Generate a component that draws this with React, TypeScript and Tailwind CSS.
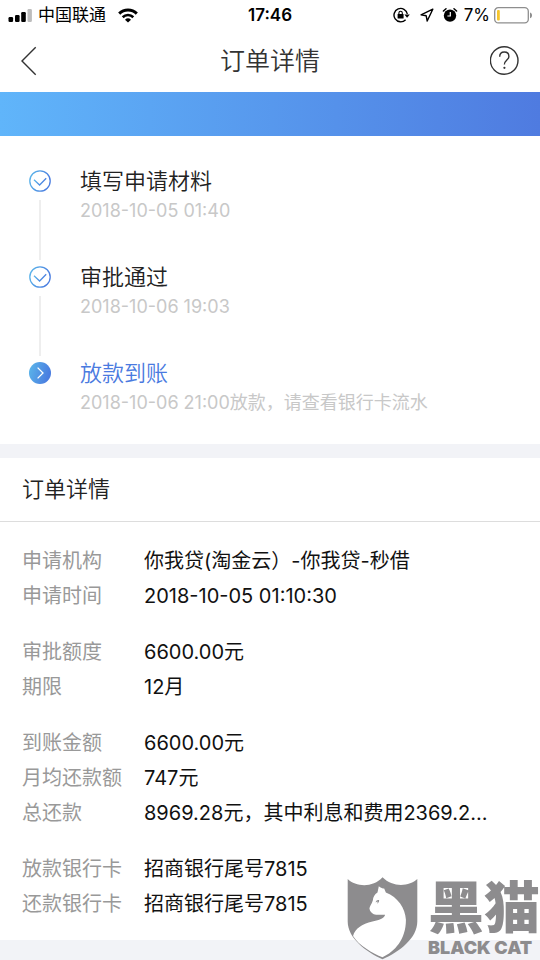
import { ReactNode } from 'react'

const STEPS = [
  { title: '填写申请材料', note: '2018-10-05 01:40', done: true },
  { title: '审批通过', note: '2018-10-06 19:03', done: true },
  { title: '放款到账', note: '2018-10-06 21:00放款，请查看银行卡流水', done: false },
]

const GROUPS = [
  [
    { label: '申请机构', value: '你我贷(淘金云）-你我贷-秒借' },
    { label: '申请时间', value: '2018-10-05 01:10:30' },
  ],
  [
    { label: '审批额度', value: '6600.00元' },
    { label: '期限', value: '12月' },
  ],
  [
    { label: '到账金额', value: '6600.00元' },
    { label: '月均还款额', value: '747元' },
    { label: '总还款', value: '8969.28元，其中利息和费用2369.2...' },
  ],
  [
    { label: '放款银行卡', value: '招商银行尾号7815' },
    { label: '还款银行卡', value: '招商银行尾号7815' },
  ],
]

function StatusBar() {
  return (
    <div className="grid grid-cols-[1fr_auto_1fr] items-center h-[30px] px-2 text-black">
      <div className="flex items-center">
        <svg viewBox="0 0 24 13" className="w-6 h-[13px]" aria-hidden="true">
          <rect x="0.5" y="8" width="4.6" height="5" rx="1.2" />
          <rect x="7" y="6" width="4.6" height="7" rx="1.2" />
          <rect x="13.2" y="3" width="4.6" height="10" rx="1.2" />
          <rect x="19.5" y="0" width="4.4" height="13" rx="1.2" fill="#bdbdbd" />
        </svg>
        <span className="ml-1.5 text-[17px] leading-[30px]">中国联通</span>
        <svg viewBox="0 0 20 15" className="ml-3 w-5 h-[15px]" aria-hidden="true">
          <path d="M1.2 5.6a12.6 12.6 0 0 1 17.6 0" fill="none" stroke="#000" strokeWidth="3" />
          <path d="M4.7 9.2a7.6 7.6 0 0 1 10.6 0" fill="none" stroke="#000" strokeWidth="2.6" />
          <path d="M10 14.6 7 11.7a4.3 4.3 0 0 1 6 0Z" />
        </svg>
      </div>
      <span className="text-[17px] leading-[30px] font-semibold">17:46</span>
      <div className="flex items-center justify-end">
        <svg viewBox="0 0 17 16" className="w-[17px] h-4" fill="none" stroke="#000" strokeWidth="1.4" aria-hidden="true">
          <path d="M12.6 12.7A6.7 6.7 0 1 1 14.3 7" />
          <path d="M11.4 7.4h5.4l-2.7 3.4z" fill="#000" stroke="none" />
          <rect x="4.6" y="7" width="6" height="4.6" rx="0.6" fill="#000" stroke="none" />
          <path d="M5.9 7.4V6a1.7 1.7 0 0 1 3.4 0v1.4" strokeWidth="1.1" />
        </svg>
        <svg viewBox="0 0 14 14" className="ml-2.5 w-3.5 h-3.5" fill="none" stroke="#000" strokeWidth="1.4" strokeLinejoin="round" aria-hidden="true">
          <path d="M12.8 1.2 1 6.8l5.2 1 1 5.2z" />
        </svg>
        <svg viewBox="0 0 16 16" className="ml-2 w-4 h-4" aria-hidden="true">
          <circle cx="8" cy="8.6" r="6.2" />
          <path d="M8.3 5v4H5.4" fill="none" stroke="#fff" strokeWidth="1.2" />
          <path d="M1.4 4 4 1.8M14.6 4 12 1.8" fill="none" stroke="#000" strokeWidth="1.5" strokeLinecap="round" />
        </svg>
        <span className="ml-1.5 text-[17px] leading-[30px]">7%</span>
        <svg viewBox="0 0 38 17" className="ml-1 w-[38px] h-[17px]" aria-hidden="true">
          <rect x="0.7" y="0.7" width="33.6" height="15.2" rx="3.6" fill="#fff" stroke="#8e8e8e" strokeWidth="1.3" />
          <rect x="3" y="3" width="2.8" height="10.6" rx="1" fill="#f5c52c" />
          <path d="M36 5.6c1.6.6 2 1.6 2 2.8s-.4 2.2-2 2.8z" fill="#8e8e8e" />
        </svg>
      </div>
    </div>
  )
}

function StepIcon({ done }: { done: boolean }) {
  return (
    <svg viewBox="0 0 22 22" className="w-[22px] h-[22px]" fill="none" aria-hidden="true">
      <defs>
        <linearGradient id={done ? 'ring' : 'disc'} x1="0" y1="0" x2="1" y2="0.3">
          <stop offset="0" stopColor="#5bb8ea" />
          <stop offset="1" stopColor="#4a7de0" />
        </linearGradient>
      </defs>
      {done ? (
        <>
          <circle cx="11" cy="11" r="10.2" stroke="url(#ring)" strokeWidth="1.3" />
          <path d="m5 9.8 5.6 5.2 6.6-6.8" stroke="url(#ring)" strokeWidth="1.3" />
        </>
      ) : (
        <>
          <circle cx="11" cy="11" r="11" fill="url(#disc)" />
          <path d="M8.6 5.6 14 11l-5.4 5.4" stroke="#fff" strokeWidth="1.3" />
        </>
      )}
    </svg>
  )
}

function Watermark() {
  return (
    <div className="absolute right-0 bottom-0 flex items-end gap-[10px] text-[#8d8c8e] pointer-events-none">
      <svg viewBox="48 52 212 248" className="w-[71px] h-[83px]" aria-hidden="true">
        <path d="M50 58C75 82 125 85 154 53c31 32 81 27 104 5v127c0 50-53 90-104 113C105 275 50 235 50 185Z" fill="currentColor" />
        <path
          d="M143 80 139 98C130 103 126 112 125 122 122 132 115 140 115 146 116 155 122 160 128 163 138 167 150 164 162 165 158 178 140 181 124 185 92 193 72 206 66 228 84 257 125 280 154 292 190 275 224 240 224 180 222 145 200 112 164 98L159 86C154 88 150 85 143 80Z"
          fill="#fff"
        />
        <path d="M134 129c-1-5 4-9 10-8 0 6-3 10-7 11 2-2 3-5 2-7-2 0-4 2-5 4Z" fill="currentColor" />
      </svg>
      <div className="flex flex-col items-start">
        <span className="text-[56px] leading-[56px] font-black">黑猫</span>
        <span className="text-[18px] leading-6 font-black">BLACK CAT</span>
      </div>
    </div>
  )
}

function Row({ label, children }: { label: string; children: ReactNode }) {
  return (
    <div className="flex text-[20px] leading-[35px]">
      <dt className="w-[122px] shrink-0 text-[#999]">{label}</dt>
      <dd className="min-w-0 truncate text-[#111]">{children}</dd>
    </div>
  )
}

export default function App() {
  return (
    <div className="relative min-h-screen flex flex-col bg-[#f2f3f7] font-[Inter,'Noto_Sans_CJK_SC',sans-serif]">
      <header className="bg-white">
        <StatusBar />
        <div className="grid grid-cols-[1fr_auto_1fr] items-center h-[62px] px-5 text-[#333]">
          <button type="button" aria-label="返回" className="justify-self-start">
            <svg viewBox="0 0 18 30" className="w-[18px] h-[30px]" fill="none" stroke="#333" strokeWidth="1.4" aria-hidden="true">
              <path d="M15.7 1.3 2 15l13.7 13.7" />
            </svg>
          </button>
          <h1 className="text-[25px] leading-[62px] font-[350]">订单详情</h1>
          <button type="button" aria-label="帮助" className="justify-self-end">
            <svg viewBox="0 0 30 30" className="w-[30px] h-[30px]" fill="none" stroke="#333" strokeWidth="1.4" aria-hidden="true">
              <circle cx="14.2" cy="14.5" r="13.8" />
              <path d="M9.7 10.8c0-2.8 1.9-4.8 4.6-4.8s4.600 1.800 4.600 4.400c0 3.500-4.500 3.700-4.500 8.100" />
              <circle cx="14.4" cy="21.8" r="1.1" fill="#333" stroke="none" />
            </svg>
          </button>
        </div>
      </header>

      <div className="h-11 bg-linear-to-r from-[#60b5fa] to-[#4f7be0]" />

      <ol className="bg-white py-7 px-7">
        {STEPS.map((step, i) => (
          <li key={step.title} className="flex gap-7">
            <div className="flex flex-col items-center w-6 pt-1.5">
              <StepIcon done={step.done} />
              {i < STEPS.length - 1 && <div className="flex-1 w-[2px] mt-2 bg-[#eee]" />}
            </div>
            <div className={i < STEPS.length - 1 ? 'h-24' : ''}>
              <p className={`text-[22px] leading-[34px] font-[350] ${step.done ? 'text-[#222]' : 'text-[#4a7ae0]'}`}>{step.title}</p>
              <p className="text-[18px] leading-[26px] text-[#c8c8c8]">{step.note}</p>
            </div>
          </li>
        ))}
      </ol>

      <section className="mt-3.5 bg-white pb-[18px]">
        <h2 className="border-b border-[#ddd] px-[22px] text-[22px] leading-[63px] font-[350] text-[#222]">订单详情</h2>
        <dl className="flex flex-col gap-[21px] px-[22px] pt-[22px]">
          {GROUPS.map((group) => (
            <div key={group[0].label}>
              {group.map((row) => (
                <Row key={row.label} label={row.label}>{row.value}</Row>
              ))}
            </div>
          ))}
        </dl>
      </section>

      <Watermark />
    </div>
  )
}
